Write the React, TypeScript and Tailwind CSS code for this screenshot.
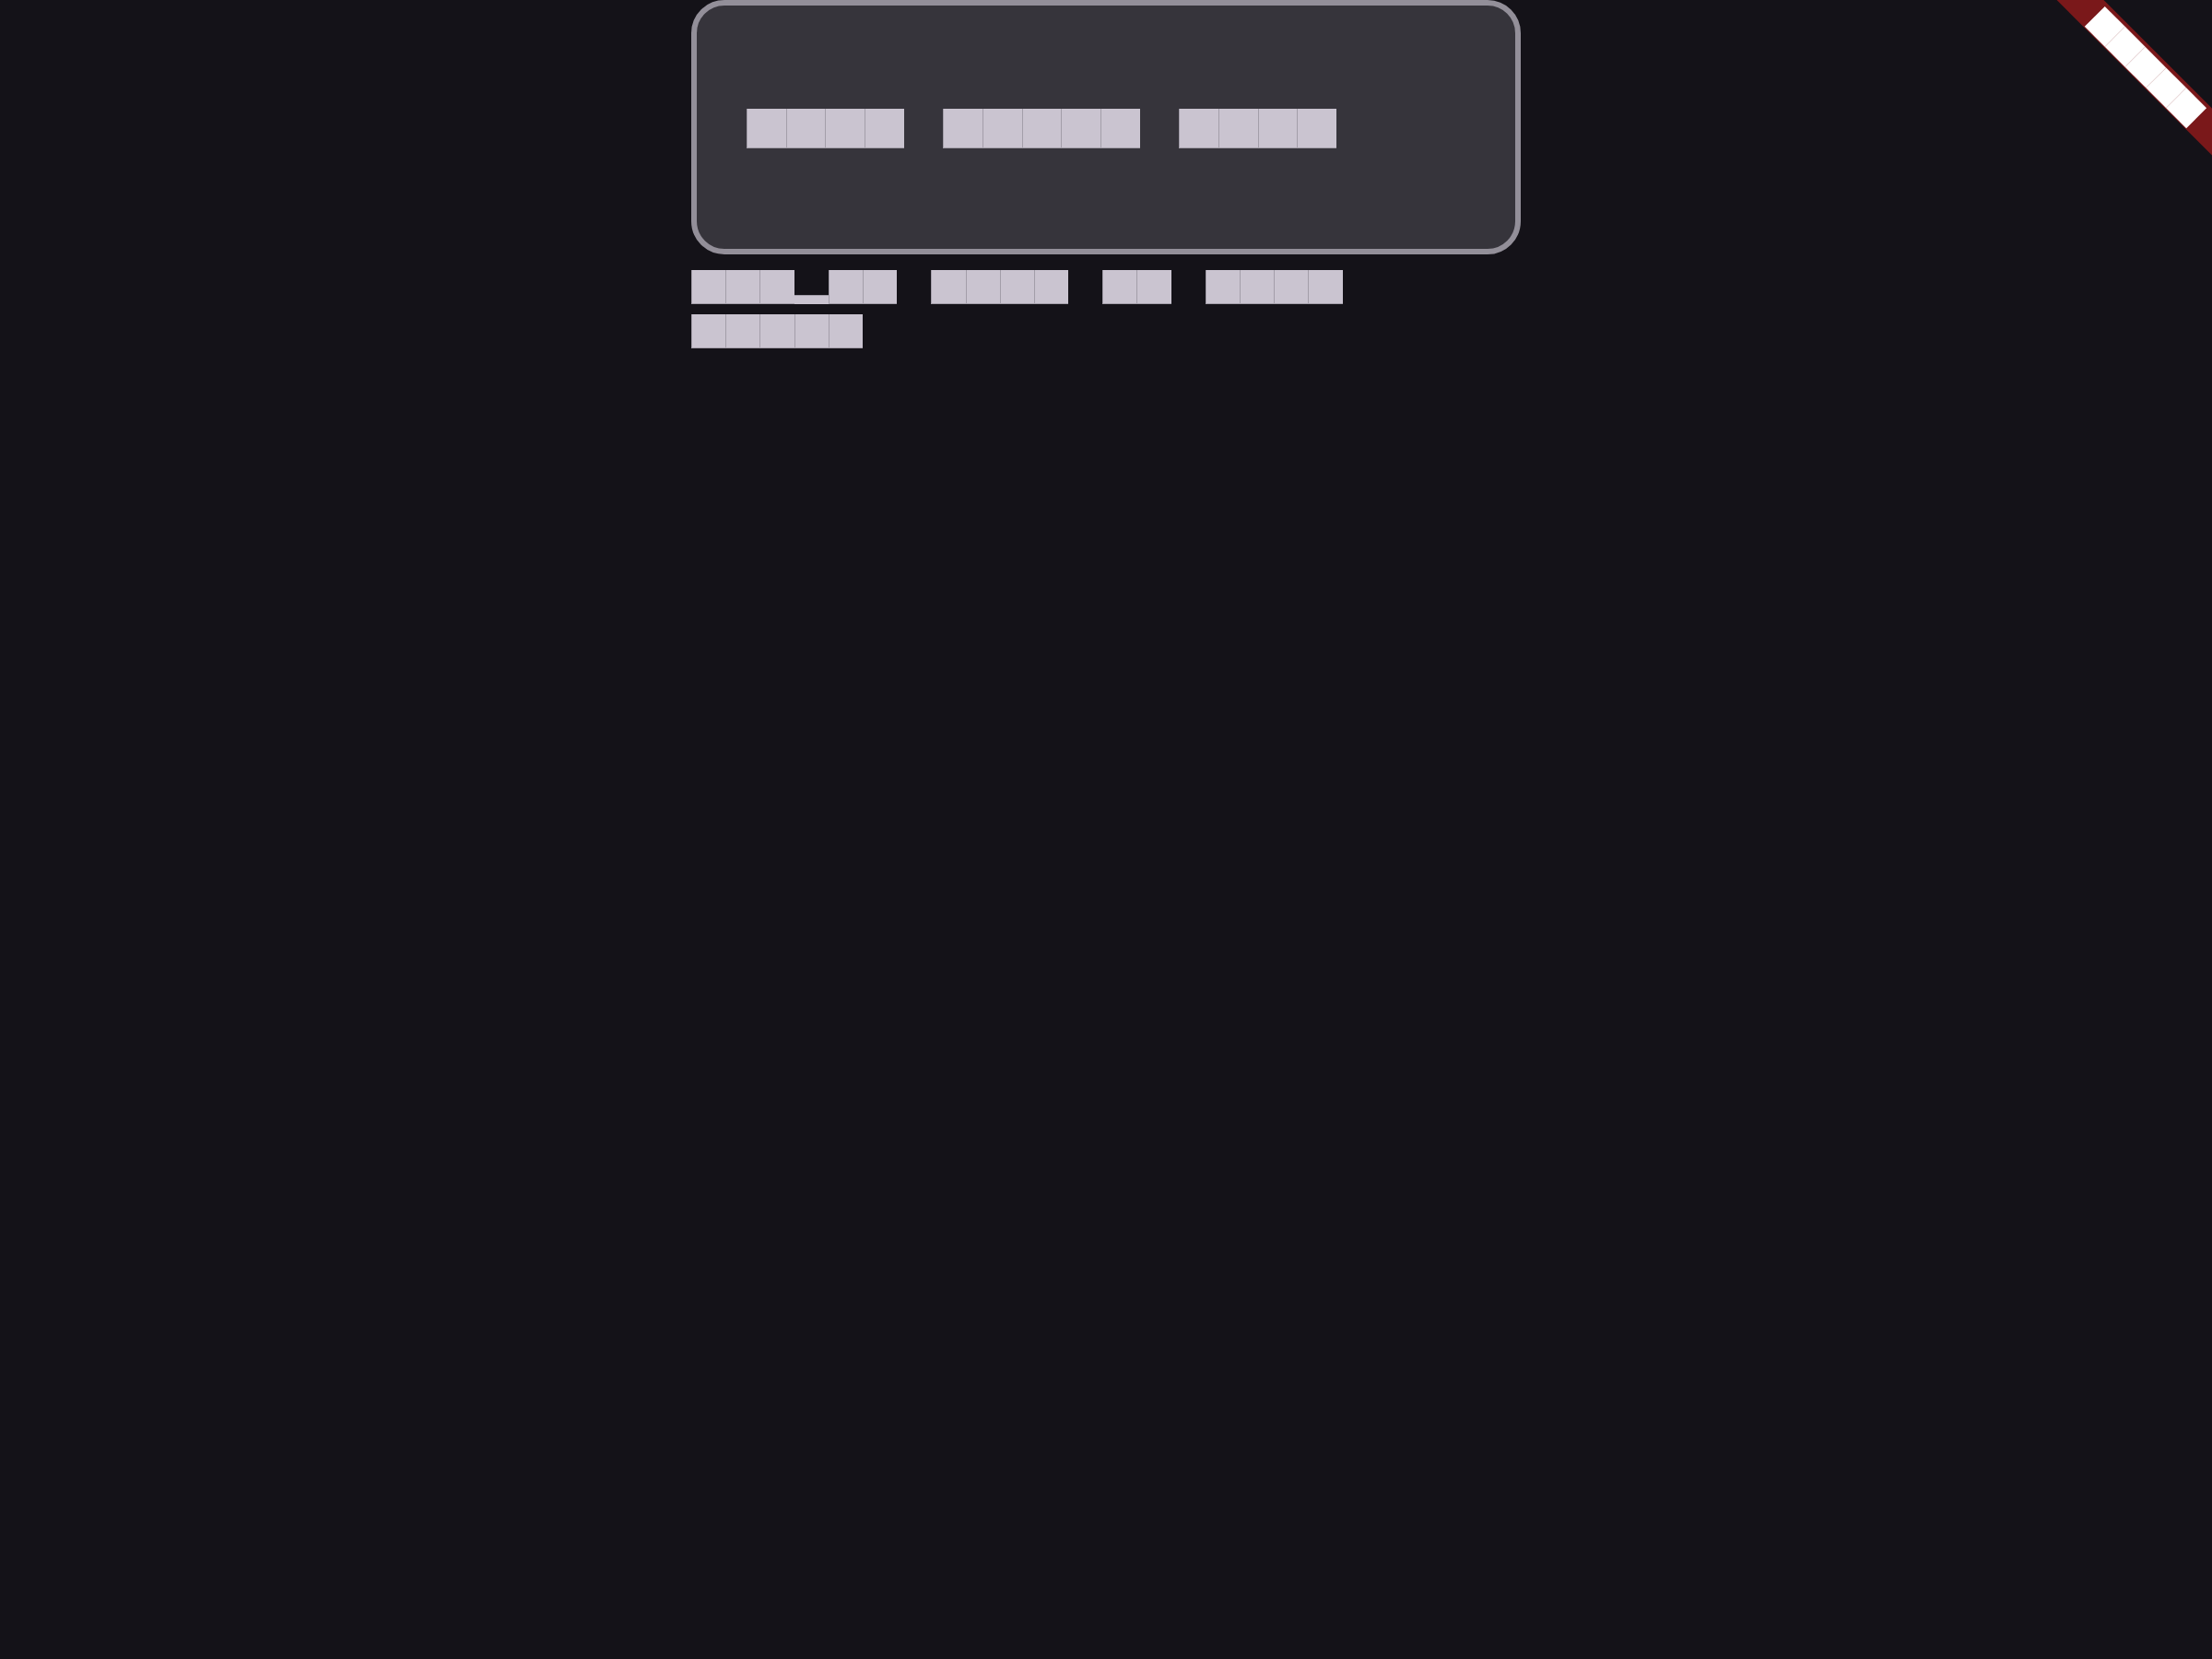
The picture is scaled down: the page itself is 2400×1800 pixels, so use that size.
import React from 'react';

type Size = 'card' | 'body' | 'banner';

// each glyph is drawn as a filled block, the way the missing font shows it
const glyph: Record<Size, string> = {
  card: 'inline-block w-[42.67px] h-[43px] overflow-hidden bg-[#cac4d0] border-l border-b border-[#a39ea9] text-transparent text-[30px] leading-[43px] text-center',
  body: 'inline-block w-[37.2px] h-[37px] overflow-hidden bg-[#cac4d0] border-l border-b border-[#a39ea9] text-transparent text-[26px] leading-[37px] text-center',
  banner: 'inline-block w-[31.1px] h-[31px] overflow-hidden bg-white text-transparent text-[20px] leading-[31px] text-center',
};

const under: Record<Size, string> = {
  card: 'inline-flex items-end w-[42.67px] h-[43px] text-transparent text-[30px] leading-[10px]',
  body: 'inline-flex items-end w-[37.2px] h-[37px] text-transparent text-[26px] leading-[10px]',
  banner: 'inline-flex items-end w-[31.1px] h-[31px] text-transparent text-[20px] leading-[8px]',
};

const line: Record<Size, string> = {
  card: 'flex flex-wrap gap-x-[42.67px] gap-y-[11px]',
  body: 'flex flex-wrap gap-x-[37.2px] gap-y-[11px]',
  banner: 'flex',
};

function BlockText({ text, size }: { text: string; size: Size }) {
  const words = text.split(' ');
  return (
    <p className={line[size]}>
      {words.map((w, i) => (
        <span key={i} className="inline-flex">
          {w.split('').map((c, j) =>
            c === '_' ? (
              <span key={j} className={under[size]}>
                <span className="block w-full h-[10px] bg-[#cac4d0] border-t border-[#a39ea9]">_</span>
              </span>
            ) : (
              <span key={j} className={glyph[size]}>
                {c}
              </span>
            )
          )}
        </span>
      ))}
    </p>
  );
}

export default function App() {
  return (
    <div className="relative min-h-screen overflow-hidden bg-[#141218] font-['Liberation_Sans',sans-serif]">
      <div className="mx-auto flex w-[900px] flex-col">
        {/* Outlined card */}
        <div className="h-[276px] rounded-[36px] border-[6px] border-[#938f99] bg-[#36343b] pl-[54px] pt-[112px]">
          <BlockText text="Card shown here" size="card" />
        </div>
        <div className="mt-[17px]">
          <BlockText text="use_m3 true in your theme" size="body" />
        </div>
      </div>

      {/* Debug banner */}
      <div className="pointer-events-none absolute right-0 top-0 h-[260px] w-[260px] overflow-hidden">
        <div className="absolute left-[38.5px] top-[54px] flex h-[36px] w-[300px] rotate-45 justify-center bg-[#7a181a] pt-[4px]">
          <BlockText text="DEBUG" size="banner" />
        </div>
      </div>
    </div>
  );
}
